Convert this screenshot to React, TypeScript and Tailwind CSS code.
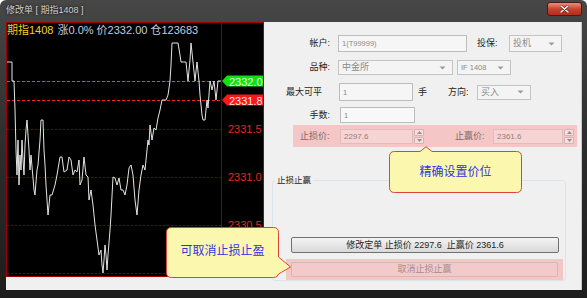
import React from 'react';

// price trace in page coordinates (x, y); mapped into the chart svg below
const trace: [number, number][] = [
  [7, 62], [12, 62], [12, 81], [14, 81], [15, 110], [16, 150], [17, 175], [18, 140], [19, 185], [20, 155],
  [21, 170], [22, 140], [23, 160], [24, 175], [25, 145], [26, 130], [27, 120], [28, 135], [29, 150], [30, 170],
  [31, 155], [33, 178], [34, 190], [35, 195], [36, 182], [37, 170], [38, 165], [40, 140], [41, 120], [43, 120],
  [44, 150], [45, 165], [46, 185], [48, 215], [49, 205], [50, 195], [52, 195], [55, 185], [57, 175], [60, 157],
  [62, 157], [64, 172], [67, 170], [69, 157], [71, 160], [73, 175], [75, 170], [77, 172], [79, 160], [80, 185],
  [82, 180], [84, 157], [86, 175], [88, 177], [89, 200], [91, 190], [93, 205], [95, 225], [97, 240], [99, 255],
  [101, 250], [102, 265], [103, 273], [104, 260], [105, 245], [106, 255], [107, 270], [108, 255], [110, 230],
  [111, 215], [113, 177], [115, 178], [117, 185], [119, 178], [121, 190], [123, 190], [125, 195], [127, 185],
  [129, 168], [131, 165], [133, 175], [135, 200], [137, 215], [139, 190], [141, 175], [143, 165], [145, 170],
  [147, 150], [148, 140], [149, 145], [150, 125], [152, 140], [154, 128], [156, 130], [158, 118], [160, 110],
  [162, 100], [166, 100], [168, 95], [170, 81], [171, 65], [172, 43], [178, 43], [180, 55], [181, 62], [186, 62],
  [188, 81], [190, 60], [191, 43], [193, 62], [195, 81], [197, 62], [199, 81], [200, 95], [202, 115], [203, 120],
  [205, 120], [206, 110], [207, 100], [208, 108], [210, 81], [212, 90], [214, 81], [216, 100], [218, 81], [221, 81],
];

const points = trace.map(([x, y]) => `${x - 6},${y - 22}`).join(' ');

// the 2330.0 level sits under the cancel tooltip, so only its line is drawn
const gridLevels = [
  { y: 107, label: '2331.5' },
  { y: 155, label: '2331.0' },
  { y: 203, label: '2330.5' },
  { y: 251, label: '' },
];

const Chart = () => (
  <div className="relative h-[255px] w-[258px] bg-black">
    <svg width={258} height={255} className="block">
      <rect x={0.5} y={0.5} width={257} height={254} fill="none" stroke="#a00000" />
      <line x1={215.5} y1={0} x2={215.5} y2={255} stroke="#8c0000" />
      {gridLevels.map((g) => (
        <g key={g.y}>
          <line x1={1} y1={g.y + 0.5} x2={215} y2={g.y + 0.5} stroke="#7a0000" strokeDasharray="2 2" />
          {g.label ? (
            <text x={222} y={g.y + 4} fill="#e02828" fontSize={11} fontFamily="Liberation Sans, sans-serif">
              {g.label}
            </text>
          ) : null}
        </g>
      ))}
      <line x1={1} y1={59.5} x2={216} y2={59.5} stroke="#00c000" strokeDasharray="3 2" />
      <line x1={1} y1={78.5} x2={216} y2={78.5} stroke="#ff2020" strokeDasharray="3 2" />
      <polyline points={points} fill="none" stroke="#e4e4e4" strokeWidth={1} />
      <polygon points="216,59 221,53.5 257,53.5 257,64.5 221,64.5" fill="#12e012" />
      <text x={223} y={63.5} fill="#e6ffe6" fontSize={11} fontFamily="Liberation Sans, sans-serif">
        2332.0
      </text>
      <polygon points="216,78 221,72.5 257,72.5 257,83.5 221,83.5" fill="#ff1616" />
      <text x={223} y={82.5} fill="#ffe8e8" fontSize={11} fontFamily="Liberation Sans, sans-serif">
        2331.8
      </text>
    </svg>
    <div className="absolute left-[1px] top-[1px] flex items-baseline gap-[4px] whitespace-nowrap text-[11px] leading-[14px]">
      <span className="text-[#f2d21a]">期指1408</span>
      <span className="text-[#c4cde0]">涨0.0% 价2332.00 仓123683</span>
    </div>
  </div>
);

const Arrow = () => (
  <svg width={7} height={4} viewBox="0 0 7 4" className="shrink-0">
    <path d="M0.5 0.5 L3.5 3.5 L6.5 0.5 Z" fill="#9a9a9a" />
  </svg>
);

const Spinner = () => (
  <div className="ml-[1px] flex h-[15px] w-[10px] flex-col gap-[1px]">
    <div className="flex flex-1 items-center justify-center rounded-[1px] border border-[#d7b4b4] bg-[#f6dede]">
      <svg width={5} height={3} viewBox="0 0 5 3">
        <path d="M0 3 L2.5 0 L5 3 Z" fill="#9a8a8a" />
      </svg>
    </div>
    <div className="flex flex-1 items-center justify-center rounded-[1px] border border-[#d7b4b4] bg-[#f6dede]">
      <svg width={5} height={3} viewBox="0 0 5 3">
        <path d="M0 0 L2.5 3 L5 0 Z" fill="#9a8a8a" />
      </svg>
    </div>
  </div>
);

const FormPanel = () => (
  <div className="flex flex-1 flex-col text-[9px] leading-[11px] text-[#1e1e1e]">
    <div className="mt-[13px] flex h-[17px] items-center">
      <div className="w-[68px] shrink-0 pr-[2px] text-right">帐户:</div>
      <div className="ml-[6px] flex h-[17px] w-[129px] items-center border border-[#bdbdbd] bg-[#f6f6f6] pl-[3px] text-[7.5px] text-[#8a8a8a]">
        1(T99999)
      </div>
      <div className="ml-[10px] w-[28px]">投保:</div>
      <div className="ml-[4px] flex h-[17px] w-[53px] items-center justify-between self-start border border-[#c4c4c4] bg-[#f4f4f4] pl-[3px] pr-[6px] text-[#8a8a8a]">
        <span>投机</span>
        <Arrow />
      </div>
    </div>

    <div className="mt-[8px] flex h-[15px] items-center">
      <div className="w-[68px] shrink-0 pr-[2px] text-right">品种:</div>
      <div className="ml-[6px] flex h-[15px] w-[115px] items-center justify-between border border-[#c4c4c4] bg-[#f4f4f4] pl-[3px] pr-[6px] text-[#8a8a8a]">
        <span>中金所</span>
        <Arrow />
      </div>
      <div className="ml-[4px] flex h-[15px] w-[54px] items-center justify-between border border-[#c4c4c4] bg-[#f4f4f4] pl-[3px] pr-[6px] text-[7.5px] text-[#8a8a8a]">
        <span>IF 1408</span>
        <Arrow />
      </div>
    </div>

    <div className="mt-[8px] flex h-[18px] items-center">
      <div className="w-[68px] shrink-0 pr-[10px] text-right">最大可平</div>
      <div className="ml-[7px] flex h-[18px] w-[74px] items-center border border-[#bdbdbd] bg-[#f6f6f6] pl-[3px] text-[7.5px] text-[#8a8a8a]">
        1
      </div>
      <div className="ml-[5px]">手</div>
      <div className="ml-[21px] w-[22px]">方向:</div>
      <div className="ml-[7px] flex h-[15px] w-[54px] items-center justify-between border border-[#c4c4c4] bg-[#f4f4f4] pl-[3px] pr-[6px] text-[#8a8a8a]">
        <span>买入</span>
        <Arrow />
      </div>
    </div>

    <div className="mt-[6px] flex h-[16px] items-center">
      <div className="w-[68px] shrink-0 pr-[2px] text-right">手数:</div>
      <div className="ml-[8px] flex h-[16px] w-[75px] items-center border border-[#bdbdbd] bg-[#f8f8f8] pl-[3px] text-[7.5px] text-[#8a8a8a]">
        1
      </div>
    </div>

    <div className="ml-[29px] mt-[2px] flex h-[22px] w-[284px] items-center bg-[#f4c6c6] pl-[7px] text-[#7c6a6a]">
      <div className="w-[40px] shrink-0">止损价:</div>
      <div className="flex h-[15px] w-[73px] items-center border border-[#e2bcbc] bg-[#f7d4d4] pl-[3px] text-[8px] text-[#9a7a7a]">
        2297.6
      </div>
      <Spinner />
      <div className="ml-[31px] w-[38px] shrink-0">止赢价:</div>
      <div className="flex h-[15px] w-[70px] items-center border border-[#e2bcbc] bg-[#f7d4d4] pl-[3px] text-[8px] text-[#9a7a7a]">
        2361.6
      </div>
      <Spinner />
    </div>

    <fieldset className="ml-[8px] mt-[28px] w-[294px] rounded-[3px] border border-[#dde3e7]">
      <legend className="ml-[2px] px-[2px] text-[8.5px] leading-[11px] text-[#1e1e1e]">止损止赢</legend>
      <div className="pt-[51px]">
        <div className="ml-[18px] flex h-[16px] w-[268px] items-center justify-center rounded-[2px] border border-[#707070] bg-gradient-to-b from-[#f4f4f4] to-[#d8d8d8] text-[9px] text-[#1e1e1e]">
          修改定单 止损价 2297.6&nbsp; 止赢价 2361.6
        </div>
        <div className="ml-[13px] mt-[6px] h-[21px] w-[277px] bg-[#f4c6c6] px-[5px] pt-[3px]">
          <div className="flex h-[15px] items-center justify-center rounded-[2px] border border-[#ddb4b4] bg-[#f3caca] text-[9px] text-[#a88a8a]">
            取消止损止赢
          </div>
        </div>
      </div>
    </fieldset>
  </div>
);

const PriceTip = () => (
  <div className="absolute left-[389px] top-[146px] h-[47px] w-[133px]">
    <svg width={133} height={47} className="absolute left-0 top-0">
      <path
        d="M5.5 5.5 H31 L37 0.8 L43 5.5 H127.5 Q132.5 5.5 132.5 10.5 V41.5 Q132.5 46.5 127.5 46.5 H5.5 Q0.5 46.5 0.5 41.5 V10.5 Q0.5 5.5 5.5 5.5 Z"
        fill="#fbf7ae"
        stroke="#d6473a"
      />
    </svg>
    <div className="absolute left-0 top-[5px] flex h-[42px] w-[133px] items-center justify-center text-[12px] text-[#2f34e6]">
      精确设置价位
    </div>
  </div>
);

const CancelTip = () => (
  <div className="absolute left-[166px] top-[227px] h-[51px] w-[126px]">
    <svg width={126} height={51} className="absolute left-0 top-0">
      <path
        d="M5.5 0.5 H107.5 Q112.5 0.5 112.5 5.5 V30 L124.5 40 L112.5 47 Q112 50.5 107.5 50.5 H5.5 Q0.5 50.5 0.5 45.5 V5.5 Q0.5 0.5 5.5 0.5 Z"
        fill="#fbf7ae"
        stroke="#d6473a"
      />
    </svg>
    <div className="absolute left-0 top-0 flex h-[47px] w-[113px] items-center justify-center text-[12px] text-[#2f34e6]">
      可取消止损止盈
    </div>
  </div>
);

export default function App() {
  return (
    <div className="relative flex h-[298px] w-[587px] flex-col overflow-hidden rounded-t-[6px] bg-gradient-to-b from-[#474747] via-[#2c2c2c] to-[#1d1d1d] font-['Liberation_Sans','Noto_Sans_CJK_SC',sans-serif]">
      <div className="flex h-[22px] shrink-0 items-start justify-between pl-[6px] pr-[5px]">
        <span className="mt-[4px] text-[9px] leading-[12px] text-[#cfcfcf] [text-shadow:0_0_3px_#000]">
          修改单 [ 期指1408 ]
        </span>
        <div className="mt-[2px] flex h-[14px] w-[35px] items-center justify-center rounded-[3px] border border-[#4a1a14] bg-gradient-to-b from-[#e88e7e] via-[#c9412c] to-[#b52d18]">
          <svg width={9} height={8} viewBox="0 0 9 8">
            <path d="M1 1 L8 7 M8 1 L1 7" stroke="#5a1a12" strokeWidth={2.6} strokeLinecap="round" />
            <path d="M1 1 L8 7 M8 1 L1 7" stroke="#ffffff" strokeWidth={1.5} strokeLinecap="round" />
          </svg>
        </div>
      </div>
      <div className="mb-[8px] ml-[6px] mr-[5px] flex flex-1 border-r border-[#c8c8c8] bg-[#f0f0f0]">
        <div className="flex w-[258px] shrink-0 flex-col">
          <Chart />
          <div className="flex-1 bg-[#f0f0f0]" />
        </div>
        <FormPanel />
      </div>
      <PriceTip />
      <CancelTip />
    </div>
  );
}
